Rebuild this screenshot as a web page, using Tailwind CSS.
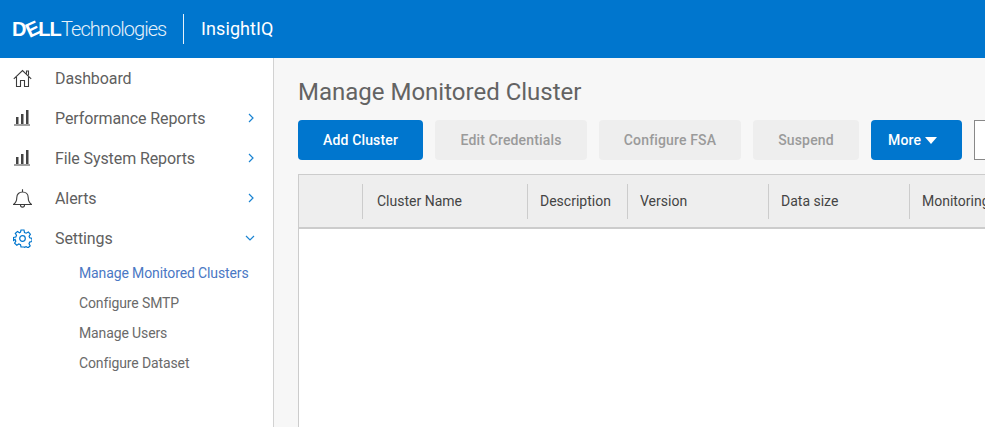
<!DOCTYPE html>
<html lang="en">
<head>
<meta charset="utf-8">
<title>InsightIQ</title>
<script src="https://cdn.jsdelivr.net/npm/@tailwindcss/browser@4"></script>
</head>
<body class="w-[985px] h-[427px] overflow-hidden font-['Roboto',sans-serif] bg-white">
<header class="h-[58px] bg-[#0076ce] flex items-center text-white">
  <div class="w-[183px] pl-[12px] flex items-center h-full">
    <span class="font-['Liberation_Sans',sans-serif] font-bold text-[20px] tracking-[-0.8px] leading-none">D<span class="inline-block -rotate-[25deg]">E</span>LL</span>
    <span class="font-light text-[20px] tracking-[-0.95px] leading-none opacity-90">Technologies</span>
  </div>
  <div class="w-px h-[30px] bg-white/90"></div>
  <div class="pl-[17px] text-[18px] tracking-[0.1px] font-normal leading-none">InsightIQ</div>
</header>
<div class="flex h-[369px]">
  <aside class="w-[274px] shrink-0 border-r border-[#d2d2d2] bg-white text-[16px] tracking-[-0.1px] text-[#5f5f5f]">
    <nav>
      <a class="h-10 flex items-center">
        <span class="w-[55px] pl-[13px] shrink-0">
          <svg class="block" width="19" height="19" viewBox="0 0 19 19" fill="none" stroke="#3c3c3c" stroke-width="1.100"><path d="M.8 9.800 9.500 1.500 18.200 9.800M3.500 8v9.500h4v-6h4v6h4V8M13.500 4.500V2h2v4.300"/></svg>
        </span>
        <span class="pt-px">Dashboard</span>
      </a>
      <a class="h-10 flex items-center">
        <span class="w-[55px] pl-[14px] shrink-0">
          <svg class="block" width="16" height="16" viewBox="0 0 16 16" fill="#444"><rect x="2" y="7" width="2.500" height="7"/><rect x="7" y="4" width="2.500" height="10"/><rect x="12" y="0" width="2.500" height="14"/><rect y="14.500" width="16" height="1"/></svg>
        </span>
        <span class="flex-1 pt-px">Performance Reports</span>
        <svg class="mr-[19px]" width="6" height="10" viewBox="0 0 6 10" fill="none" stroke="#1b84d2" stroke-width="1.200"><path d="M1 1l4 4-4 4"/></svg>
      </a>
      <a class="h-10 flex items-center">
        <span class="w-[55px] pl-[14px] shrink-0">
          <svg class="block" width="16" height="16" viewBox="0 0 16 16" fill="#444"><rect x="2" y="7" width="2.500" height="7"/><rect x="7" y="4" width="2.500" height="10"/><rect x="12" y="0" width="2.500" height="14"/><rect y="14.500" width="16" height="1"/></svg>
        </span>
        <span class="flex-1 pt-px">File System Reports</span>
        <svg class="mr-[19px]" width="6" height="10" viewBox="0 0 6 10" fill="none" stroke="#1b84d2" stroke-width="1.200"><path d="M1 1l4 4-4 4"/></svg>
      </a>
      <a class="h-10 flex items-center">
        <span class="w-[55px] pl-[13px] shrink-0">
          <svg class="block" width="19" height="19" viewBox="0 0 19 19" fill="none" stroke="#3c3c3c" stroke-width="1.100"><path d="M.5 15.500h18c-2-1.500-3.300-3.500-3.300-7 0-3.300-2.400-5.500-5.700-5.500S3.800 5.200 3.800 8.500c0 3.500-1.300 5.500-3.300 7ZM9.500 3V.300M7.500 16c0 2.800 4 2.800 4 0"/></svg>
        </span>
        <span class="flex-1 pt-px">Alerts</span>
        <svg class="mr-[19px]" width="6" height="10" viewBox="0 0 6 10" fill="none" stroke="#1b84d2" stroke-width="1.200"><path d="M1 1l4 4-4 4"/></svg>
      </a>
      <a class="h-10 flex items-center">
        <span class="w-[55px] pl-[13px] shrink-0">
          <svg class="block" width="19" height="19" viewBox="0 0 19 19" fill="none" stroke="#0076ce" stroke-width="1.200"><circle cx="9.500" cy="9.500" r="2.800"/><path d="M8 1h3l.5 2.500 1.700.7L15.400 3l2 2.200-1.300 2 .6 1.600 2.300.7v3l-2.300.6-.7 1.700 1.200 2-2.100 2-2-1.200-1.700.7L11 18H8l-.5-2.300-1.700-.7-2 1.200-2.200-2 1.200-2-.7-1.700L.5 11.500v-3L2.800 8l.7-1.700-1.200-2L4.500 2.500l2 1.200 1-.5Z"/></svg>
        </span>
        <span class="flex-1 pt-px">Settings</span>
        <svg class="mr-[18px]" width="10" height="6" viewBox="0 0 10 6" fill="none" stroke="#1b84d2" stroke-width="1.200"><path d="M1 1l4 4 4-4"/></svg>
      </a>
    </nav>
    <ul class="text-[14px] tracking-[-0.12px] pl-[79px] text-[#6a6a6a]">
      <li class="h-[30px] flex items-center text-[#4a78c4]">Manage Monitored Clusters</li>
      <li class="h-[30px] flex items-center">Configure SMTP</li>
      <li class="h-[30px] flex items-center">Manage Users</li>
      <li class="h-[30px] flex items-center">Configure Dataset</li>
    </ul>
  </aside>
  <main class="flex-1 min-w-0 bg-[#f7f7f7] pl-6 pt-[18px] overflow-hidden">
    <h1 class="text-[24px] leading-[32px] text-[#636363] font-normal whitespace-nowrap">Manage Monitored Cluster</h1>
    <div class="flex gap-3 mt-3 text-[14px] tracking-[0.15px] whitespace-nowrap w-[800px]">
      <button class="h-10 w-[125px] shrink-0 rounded-sm bg-[#0076ce] text-white font-medium">Add Cluster</button>
      <button class="h-10 w-[152px] shrink-0 rounded-sm bg-[#eeeeee] text-[#9a9a9a] font-medium">Edit Credentials</button>
      <button class="h-10 w-[142px] shrink-0 rounded-sm bg-[#eeeeee] text-[#9a9a9a] font-medium">Configure FSA</button>
      <button class="h-10 w-[106px] shrink-0 rounded-sm bg-[#eeeeee] text-[#9a9a9a] font-medium">Suspend</button>
      <button class="h-10 w-[91px] shrink-0 rounded-sm bg-[#0076ce] text-white font-medium flex items-center pl-[17px] gap-1">More
        <svg width="12" height="7" viewBox="0 0 12 7" fill="#fff"><path d="M0 0h12L6 7Z"/></svg>
      </button>
      <div class="h-10 w-[60px] shrink-0 border border-[#888888] bg-white"></div>
    </div>
    <div class="mt-[14px] w-[800px] h-[260px] border border-[#cccccc] bg-white text-[14px] text-[#444444] whitespace-nowrap">
      <div class="h-[54px] bg-[#eeeeee] border-b-2 border-[#cccccc] flex items-center">
        <div class="w-[64px] h-[35px] border-r border-[#cccccc] shrink-0"></div>
        <div class="w-[165px] h-[35px] border-r border-[#cccccc] shrink-0 flex items-center pl-[14px]">Cluster Name</div>
        <div class="w-[100px] h-[35px] border-r border-[#cccccc] shrink-0 flex items-center pl-3">Description</div>
        <div class="w-[141px] h-[35px] border-r border-[#cccccc] shrink-0 flex items-center pl-3">Version</div>
        <div class="w-[141px] h-[35px] border-r border-[#cccccc] shrink-0 flex items-center pl-3">Data size</div>
        <div class="h-[35px] flex items-center pl-3">Monitoring</div>
      </div>
    </div>
  </main>
</div>
</body>
</html>
